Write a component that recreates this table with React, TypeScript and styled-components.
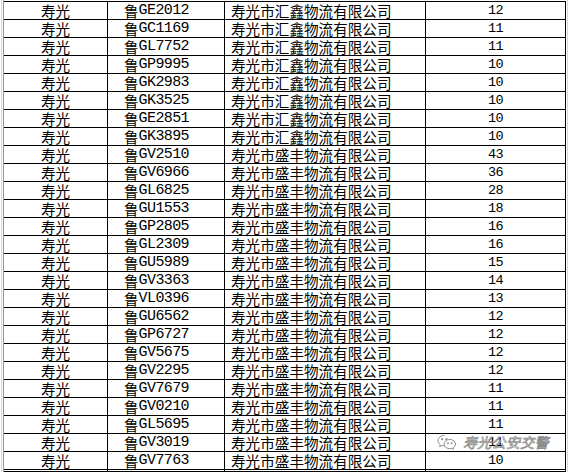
import React from 'react';
import styled, { createGlobalStyle } from 'styled-components';

const GlobalStyle = createGlobalStyle`
  html, body {
    margin: 0;
    padding: 0;
    background: #ffffff;
  }
  body {
    width: 568px;
    height: 472px;
    overflow: hidden;
    font-family: "Liberation Mono", "Noto Sans CJK SC", monospace;
    color: #000;
  }
`;

const Sheet = styled.div`
  position: relative;
  width: 568px;
  height: 472px;
  overflow: hidden;
  display: flex;
  background: #fff;
`;

const Gutter = styled.div`
  width: 3px;
  flex: none;
  border-left: 1px solid #cfd6de;
  border-right: 1px solid #8d99a6;
  margin-left: 1px;
  box-sizing: border-box;
`;

const Table = styled.div`
  margin-top: 1px;
  border-top: 1px solid #000;
  display: flex;
  flex-direction: column;
`;

const Row = styled.div`
  display: grid;
  grid-template-columns: 104px 117px 201px 140px;
  height: 18px;
  box-sizing: border-box;
  border-bottom: 1px solid #000;
`;

const Cell = styled.div<{ $align?: 'left' | 'center'; $pad?: number; $size?: number; $track?: number }>`
  box-sizing: border-box;
  border-right: 1px solid #000;
  display: flex;
  align-items: center;
  justify-content: ${(p) => (p.$align === 'left' ? 'flex-start' : 'center')};
  padding-left: ${(p) => p.$pad ?? 0}px;
  font-size: ${(p) => p.$size ?? 15}px;
  letter-spacing: ${(p) => p.$track ?? 0}px;
  line-height: 17px;
  white-space: nowrap;
`;

const Han = styled.span`
  font-family: "Noto Sans CJK SC", sans-serif;
  font-size: 14.6px;
  letter-spacing: 0;
  line-height: 17px;
`;

const RightEdge = styled.div`
  width: 1px;
  margin-left: 1px;
  background: #d6dbe0;
`;

// watermark pasted over the table by the publisher
const Watermark = styled.div`
  position: absolute;
  left: 437px;
  top: 434px;
  display: flex;
  align-items: center;
  gap: 6px;
  pointer-events: none;
`;

const MarkText = styled.span`
  font-family: "Noto Sans CJK SC", sans-serif;
  font-size: 14px;
  line-height: 16px;
  letter-spacing: 0.3px;
  color: rgba(255, 255, 255, 0.8);
  -webkit-text-stroke: 0.7px #8c8c8c;
  font-style: italic;
`;

type Entry = { plate: string; company: string; count: number };

const HX = '寿光市汇鑫物流有限公司';
const SF = '寿光市盛丰物流有限公司';

const rows: Entry[] = [
  { plate: 'GE2012', company: HX, count: 12 },
  { plate: 'GC1169', company: HX, count: 11 },
  { plate: 'GL7752', company: HX, count: 11 },
  { plate: 'GP9995', company: HX, count: 10 },
  { plate: 'GK2983', company: HX, count: 10 },
  { plate: 'GK3525', company: HX, count: 10 },
  { plate: 'GE2851', company: HX, count: 10 },
  { plate: 'GK3895', company: HX, count: 10 },
  { plate: 'GV2510', company: SF, count: 43 },
  { plate: 'GV6966', company: SF, count: 36 },
  { plate: 'GL6825', company: SF, count: 28 },
  { plate: 'GU1553', company: SF, count: 18 },
  { plate: 'GP2805', company: SF, count: 16 },
  { plate: 'GL2309', company: SF, count: 16 },
  { plate: 'GU5989', company: SF, count: 15 },
  { plate: 'GV3363', company: SF, count: 14 },
  { plate: 'VL0396', company: SF, count: 13 },
  { plate: 'GU6562', company: SF, count: 12 },
  { plate: 'GP6727', company: SF, count: 12 },
  { plate: 'GV5675', company: SF, count: 12 },
  { plate: 'GV2295', company: SF, count: 12 },
  { plate: 'GV7679', company: SF, count: 11 },
  { plate: 'GV0210', company: SF, count: 11 },
  { plate: 'GL5695', company: SF, count: 11 },
  { plate: 'GV3019', company: SF, count: 11 },
  { plate: 'GV7763', company: SF, count: 10 },
];

const WeChatMark: React.FC = () => (
  <svg width="20" height="16" viewBox="0 0 20 16" fill="none" stroke="#8c8c8c" strokeWidth="1">
    <path d="M7.5 1.5C3.9 1.5 1 3.8 1 6.7c0 1.6.9 3 2.3 4l-.6 1.9 2.2-1.1c.8.2 1.6.4 2.6.4" />
    <path d="M12.8 5.5c-3.2 0-5.8 2-5.8 4.6s2.6 4.6 5.8 4.6c.7 0 1.4-.1 2-.3l1.8.9-.5-1.6c1.5-.9 2.4-2.1 2.4-3.6 0-2.6-2.6-4.6-5.7-4.6z" />
    <circle cx="5.2" cy="5.2" r="0.7" fill="#8c8c8c" />
    <circle cx="9.4" cy="5.2" r="0.7" fill="#8c8c8c" />
    <circle cx="11" cy="9.2" r="0.6" fill="#8c8c8c" />
    <circle cx="14.6" cy="9.2" r="0.6" fill="#8c8c8c" />
  </svg>
);

const App: React.FC = () => {
  return (
    <>
      <GlobalStyle />
      <Sheet>
        <Gutter />
        <Table>
          {rows.map((r) => (
            <Row key={r.plate}>
              <Cell>
                <Han>寿光</Han>
              </Cell>
              <Cell $align="left" $pad={16} $size={15} $track={-0.6}>
                <Han>鲁</Han>
                {r.plate}
              </Cell>
              <Cell $align="left" $pad={6}>
                <Han>{r.company}</Han>
              </Cell>
              <Cell $size={13.5} $track={-0.5}>{r.count}</Cell>
            </Row>
          ))}
          <Row>
            <Cell />
            <Cell />
            <Cell />
            <Cell />
          </Row>
        </Table>
        <RightEdge />
        <Watermark>
          <WeChatMark />
          <MarkText>寿光公安交警</MarkText>
        </Watermark>
      </Sheet>
    </>
  );
};

export default App;
